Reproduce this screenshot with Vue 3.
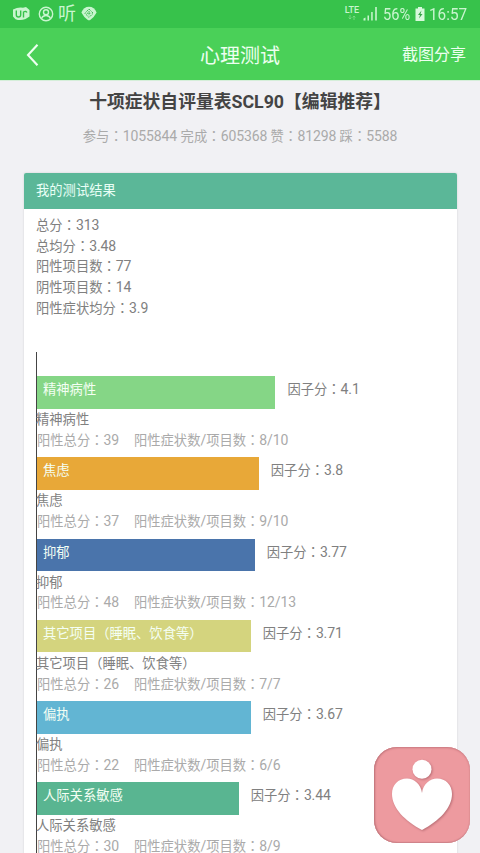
<script setup>
import { h } from 'vue'

// Renders a label with full-width colons centred in their cell and slightly larger figures.
const Label = (props) =>
  h('span', { class: 'label' }, props.text.split(/(：|[\d./]+)/).map((part) => {
    if (part === '：') return h('span', { class: 'colon' }, part)
    return /^[\d./]+$/.test(part) ? h('span', { class: 'num' }, part) : part
  }))
Label.props = ['text']

const summary = ['总分：313', '总均分：3.48', '阳性项目数：77', '阴性项目数：14', '阳性症状均分：3.9']

const factors = [
  { name: '精神病性', score: '4.1', total: 39, ratio: '8/10', width: 238.4, color: '#85d686' },
  { name: '焦虑', score: '3.8', total: 37, ratio: '9/10', width: 221.8, color: '#e8a838' },
  { name: '抑郁', score: '3.77', total: 48, ratio: '12/13', width: 217.7, color: '#4a74ab' },
  { name: '其它项目（睡眠、饮食等）', score: '3.71', total: 26, ratio: '7/7', width: 213.7, color: '#d4d47e' },
  { name: '偏执', score: '3.67', total: 22, ratio: '6/6', width: 213.7, color: '#62b5d3' },
  { name: '人际关系敏感', score: '3.44', total: 30, ratio: '8/9', width: 201.7, color: '#59b591' },
]
</script>

<template>
  <div class="screen">
    <div class="status">
      <div class="status-left">
        <svg class="i-u" width="18" height="16" viewBox="0 0 18 16">
          <path d="M1 3.500Q6 1 11 1.800L14 1l3.500 3v6.500L13.500 13Q8.500 15 3.500 13.200L1 10.500z" fill="#c9f5cf" />
          <path d="M4.300 4.500v4.200q0 2.300 2.200 2.300t2.200-2.300V4.500M11.500 11.500V6q2.600-1.400 3.400.6" fill="none" stroke="#37c24b" stroke-width="1.400" />
        </svg>
        <svg class="i-user" width="16" height="16" viewBox="0 0 16 16" fill="none" stroke="#c9f5cf" stroke-width="1.4">
          <circle cx="8" cy="8" r="6.7" /><circle cx="8" cy="6.2" r="2.5" /><path d="M3.5 12.6Q4.5 9.5 8 9.5t4.5 3.1" />
        </svg>
        <span class="listen">听</span>
        <svg class="i-fan" width="16" height="15" viewBox="0 0 16 15">
          <path d="M.4 6.5Q2.6 .8 8 .8t7.6 5.7Q13 11.5 9.2 14q-1.2.7-2.4 0Q3 11.500 .4 6.500z" fill="#c9f5cf" />
          <path d="M8 3 12.200 7.200 8 11.400 3.800 7.200zM8 5v4.400M5.800 7.200h4.400" fill="none" stroke="#42b955" stroke-width="1" stroke-dasharray="1.5 .6" />
        </svg>
      </div>
      <div class="status-right">
        <div class="lte"><span>LTE</span>
          <svg width="8" height="5" viewBox="0 0 8 5" fill="none" stroke="#83dc8e" stroke-width=".8"><path d="M2 0v4M.6 2.6 2 4l1.4-1.4M6 5V1M4.6 2.4 6 1l1.4 1.4" /></svg>
        </div>
        <svg class="i-signal" width="15" height="15" viewBox="0 0 15 15" fill="#c9f5cf">
          <path d="M.5 14.5v-2l2-1v3z" /><path d="M4.5 9.5H6v5H4.5zM8.200 6h1.500v8.500H8.200zM12.200 1h1.600v13.500h-1.600z" />
        </svg>
        <span class="pct">56%</span>
        <svg class="i-batt" width="10" height="14" viewBox="0 0 10 14"><path d="M3 0h4v1.5h2.5V14H.5V1.5H3z" fill="#d8f9dc" /><path d="M6.5 3.5 3 8h2L4 11.5 7.5 7h-2z" fill="#36a447" /></svg>
        <span class="time">16:57</span>
      </div>
    </div>

    <header class="nav">
      <svg class="back" width="14" height="24" viewBox="0 0 14 24"><path d="M11.5 1.8 2 12l9.5 10.2" fill="none" stroke="#edfff0" stroke-width="2.1" /></svg>
      <h1>心理测试</h1>
      <span class="share">截图分享</span>
    </header>

    <main>
      <h2>十项症状自评量表SCL90【编辑推荐】</h2>
      <p class="stats"><Label text="参与：1055844 完成：605368 赞：81298 踩：5588" /></p>
      <section class="card">
        <div class="card-head">我的测试结果</div>
        <div class="summary">
          <div v-for="s in summary" :key="s"><Label :text="s" /></div>
        </div>
        <div class="chart">
          <div v-for="f in factors" :key="f.name" class="factor">
            <div class="bar-row">
              <div class="bar" :style="{ width: f.width + 'px', background: f.color }">{{ f.name }}</div>
              <Label class="score" :text="'因子分：' + f.score" />
            </div>
            <div class="name">{{ f.name }}</div>
            <div class="detail">
              <Label :text="'阳性总分：' + f.total" />
              <Label :text="'阳性症状数/项目数：' + f.ratio" />
            </div>
          </div>
        </div>
      </section>
    </main>

    <div class="float">
      <svg width="96" height="96" viewBox="0 0 96 96">
        <g fill="#fff">
          <circle cx="48" cy="22.3" r="9.5" />
          <path d="M48 46C47 37 40 31.5 33 31.5 24 31.5 18 38 18 47 18 61 31 74 48 83 65 74 78 61 78 47 78 38 72 31.5 63 31.5 56 31.5 49 37 48 46z" />
        </g>
      </svg>
    </div>
  </div>
</template>

<style>
body { margin: 0; overflow: hidden; }
</style>

<style scoped>
.screen {
  position: relative;
  width: 480px;
  height: 853px;
  overflow: hidden;
  background: #f1f1f4;
  font-family: Roboto, "Noto Sans CJK SC", sans-serif;
  font-size: 13.3px;
  color: #808080;
}
.label { white-space: nowrap; }
:deep(.colon) { font-family: "Noto Sans CJK TC", sans-serif; line-height: 1; }
:deep(.num) { font-size: 14px; line-height: 1; letter-spacing: -0.12px; }
.status {
  height: 28px;
  background: #37c24b;
  color: #c9f5cf;
  display: flex;
  justify-content: space-between;
  box-sizing: border-box;
  padding: 0 12px 0 12px;
}
.status-left, .status-right { display: flex; align-items: center; height: 27px; }
.i-user { margin-left: 8px; }
.listen { font-size: 18px; line-height: 27px; margin-left: 4px; }
.i-fan { margin-left: 5px; }
.lte { display: flex; flex-direction: column; align-items: center; gap: 1px; font-size: 9px; line-height: 8px; font-weight: 500; margin-top: -2px; }
.i-signal { margin-left: 4px; }
.pct { font-size: 17px; margin-left: 5px; width: 29px; white-space: nowrap; transform: scaleX(.86); transform-origin: left; }
.i-batt { margin-left: 3px; }
.time { font-size: 17px; margin-left: 4px; width: 39px; white-space: nowrap; transform: scaleX(.9); transform-origin: left; }
.nav {
  height: 52px;
  background: #4ad058;
  border-bottom: 1px solid #d5eed9;
  display: grid;
  grid-template-columns: 100px 1fr 100px;
  align-items: center;
  color: #edfff0;
}
.back { margin-left: 26px; }
h1 { margin: 0; font-size: 20px; font-weight: 400; text-align: center; line-height: 52px; padding-top: 2px; }
.share { font-size: 16px; line-height: 24px; text-align: right; padding: 0 14px 0 0; }
h2 {
  margin: 8px 0 0;
  font-size: 17.8px;
  line-height: 26px;
  font-weight: 700;
  color: #444;
  text-align: center;
  white-space: nowrap;
}
.stats { margin: 12px 0 0; line-height: 20px; color: #aaa; text-align: center; letter-spacing: 0.1px; }
.card {
  margin: 26px 23px 0 24px;
  height: 720px;
  background: #fff;
  border-radius: 2px 2px 0 0;
  box-shadow: 0 0 2px #ccc;
}
.card-head {
  height: 35.5px;
  line-height: 35px;
  padding-left: 12px;
  background: #5bb798;
  color: #e9fff6;
  border-radius: 2px 2px 0 0;
}
.summary { padding: 7.4px 12px 0; line-height: 20.7px; }
.chart { margin: 32.6px 0 0 12px; padding-top: 24px; border-left: 1px solid #444; height: 520px; }
.factor { height: 81.25px; line-height: 20.6px; }
.bar-row { display: flex; height: 32.5px; line-height: 28px; }
.bar { box-sizing: border-box; padding-left: 6px; color: #f4fff4; white-space: nowrap; }
.score { margin-left: 12px; }
.name { padding-top: 1.7px; margin-left: -1px; }
.detail { display: flex; gap: 15px; color: #aaa; }
.float {
  position: absolute;
  left: 374px;
  top: 747px;
  width: 96px;
  height: 96px;
  border-radius: 23px;
  background: #ed9a9f;
  box-shadow: inset 1px 0 2px #bd7379, inset 0 1px 2px #d28187, inset 0 -1px 1px #d48a90;
}
.float svg { display: block; filter: drop-shadow(1px 1px 1px #b96e75); }
</style>
